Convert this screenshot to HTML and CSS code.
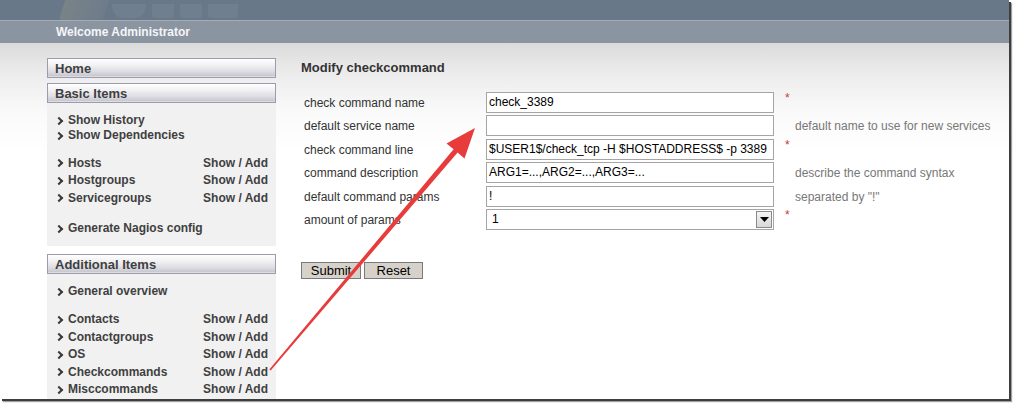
FILE: index.html
```html
<!DOCTYPE html>
<html>
<head>
<meta charset="utf-8">
<title>Modify checkcommand</title>
<link rel="stylesheet" href="styles.css">
</head>
<body>
<div class="frame">
  <div class="top">
    <div class="logo">
      <span class="lg lg1"></span><span class="lg lg2"></span><span class="lg lg3"></span><span class="lg lg4"></span><span class="lg lg5"></span>
    </div>
  </div>
  <div class="welcome">Welcome Administrator</div>
  <div class="content">
    <aside class="side">
      <div class="box-head">Home</div>
      <div class="box-head gap">Basic Items</div>
      <div class="panel p1">
        <div class="grp tight">
          <div class="item"><span class="chev"></span>Show History</div>
          <div class="item"><span class="chev"></span>Show Dependencies</div>
        </div>
        <div class="grp wide g2">
          <div class="item"><span class="chev"></span>Hosts<span class="sa">Show / Add</span></div>
          <div class="item"><span class="chev"></span>Hostgroups<span class="sa">Show / Add</span></div>
          <div class="item"><span class="chev"></span>Servicegroups<span class="sa">Show / Add</span></div>
        </div>
        <div class="grp tight g3">
          <div class="item"><span class="chev"></span>Generate Nagios config</div>
        </div>
      </div>
      <div class="box-head gap2">Additional Items</div>
      <div class="panel p2">
        <div class="grp tight">
          <div class="item"><span class="chev"></span>General overview</div>
        </div>
        <div class="grp wide g2b">
          <div class="item"><span class="chev"></span>Contacts<span class="sa">Show / Add</span></div>
          <div class="item"><span class="chev"></span>Contactgroups<span class="sa">Show / Add</span></div>
          <div class="item"><span class="chev"></span>OS<span class="sa">Show / Add</span></div>
          <div class="item"><span class="chev"></span>Checkcommands<span class="sa">Show / Add</span></div>
          <div class="item"><span class="chev"></span>Misccommands<span class="sa">Show / Add</span></div>
        </div>
      </div>
    </aside>
    <main class="main">
      <h1 class="title">Modify checkcommand</h1>
      <div class="form">
        <div class="lbl">check command name</div>
        <div class="field"><div class="inp">check_3389</div></div>
        <div class="star">*</div>
        <div class="hint"></div>

        <div class="lbl">default service name</div>
        <div class="field"><div class="inp"></div></div>
        <div class="star"></div>
        <div class="hint">default name to use for new services</div>

        <div class="lbl">check command line</div>
        <div class="field"><div class="inp">$USER1$/check_tcp -H $HOSTADDRESS$ -p 3389</div></div>
        <div class="star">*</div>
        <div class="hint"></div>

        <div class="lbl">command description</div>
        <div class="field"><div class="inp">ARG1=...,ARG2=...,ARG3=...</div></div>
        <div class="star"></div>
        <div class="hint">describe the command syntax</div>

        <div class="lbl">default command params</div>
        <div class="field"><div class="inp">!</div></div>
        <div class="star"></div>
        <div class="hint">separated by "!"</div>

        <div class="lbl">amount of params</div>
        <div class="field"><div class="inp sel"><span class="selval">1</span><span class="selbtn"><svg width="9" height="5" viewBox="0 0 9 5"><polygon points="0,0 9,0 4.5,5" fill="#000"/></svg></span></div></div>
        <div class="star">*</div>
        <div class="hint"></div>
      </div>
      <div class="buttons">
        <button class="btn b-submit">Submit</button>
        <button class="btn b-reset">Reset</button>
      </div>
    </main>
  </div>
  <svg class="arrow" width="1013" height="403" viewBox="0 0 1013 403">
    <polygon fill="#e83c3c" points="475,128 464.5,158.5 457.6,152.6 270.7,370.6 269.3,369.4 453.6,149.2 446.5,143.5"/>
  </svg>
</div>
</body>
</html>
```
FILE: styles.css
```css
html, body {
  margin: 0;
  padding: 0;
  background: #ffffff;
}
body {
  font-family: "Liberation Sans", Arial, sans-serif;
  width: 1013px;
  height: 403px;
  overflow: hidden;
}
.frame {
  position: relative;
  width: 1009px;
  height: 399px;
  overflow: hidden;
  background: #ffffff;
  box-shadow: 2px 2px 0 #3e3e3e, 3px 3px 1px #a0a0a0;
}
.top {
  height: 20px;
  background: #687889;
  border-bottom: 1px solid #a3acb7;
  overflow: hidden;
}
.logo {
  display: flex;
  align-items: flex-end;
  gap: 6px;
  height: 20px;
  padding-left: 62px;
}
.lg {
  display: block;
  height: 14px;
  margin-bottom: 2px;
  border-radius: 0 0 3px 3px;
  background: rgba(190, 196, 205, 0.09);
}
.lg1 {
  width: 44px;
  height: 20px;
  margin-bottom: 0;
  background: linear-gradient(100deg, rgba(200, 180, 130, 0.18), rgba(170, 170, 160, 0.08));
  transform: skewX(-18deg);
}
.lg2 { width: 34px; border-radius: 0 0 12px 12px; }
.lg3 { width: 22px; }
.lg4 { width: 22px; }
.lg5 { width: 30px; }
.welcome {
  height: 22px;
  line-height: 22px;
  background: #8b95a2;
  color: #f5f6f8;
  font-weight: bold;
  font-size: 12px;
  padding-left: 56px;
}
.content {
  display: flex;
  padding: 15px 0 0 47px;
  height: 341px;
  background: linear-gradient(#dbdbdb 0px, #ececec 30px, #fafafa 70px, #ffffff 110px);
}
.side {
  width: 229px;
  flex: none;
}
.box-head {
  height: 18px;
  line-height: 19px;
  border: 1px solid #9c9cae;
  background: linear-gradient(#fefefe 0%, #f1f1f3 35%, #dcdce2 70%, #c9c9d2 92%, #e6e6ea 100%);
  color: #404040;
  font-weight: bold;
  font-size: 13px;
  padding-left: 7px;
}
.box-head.gap { margin-top: 5px; }
.box-head.gap2 { margin-top: 8px; }
.panel {
  background: #f1f1f1;
  padding: 0 8px 0 10px;
}
.p1 { padding-top: 10px; padding-bottom: 10px; }
.p2 { padding-top: 10px; padding-bottom: 20px; }
.grp.tight .item { height: 15px; line-height: 15px; }
.grp.wide .item { height: 17.5px; line-height: 17.5px; }
.g2 { margin-top: 11.5px; }
.g3 { margin-top: 14px; }
.g2b { margin-top: 12px; }
.item {
  display: flex;
  align-items: center;
  font-size: 12px;
  font-weight: bold;
  color: #404040;
  white-space: nowrap;
}
.chev {
  display: inline-block;
  width: 4px;
  height: 4px;
  border-right: 2px solid #3a3a3a;
  border-bottom: 2px solid #3a3a3a;
  transform: rotate(-45deg);
  margin: 0 6px 0 -1px;
}
.sa {
  margin-left: auto;
}
.main {
  flex: 1;
  margin-left: 25px;
}
.title {
  margin: 0;
  font-size: 13px;
  line-height: 19px;
  font-weight: bold;
  color: #333;
}
.form {
  display: grid;
  grid-template-columns: 182px 288px 21px 1fr;
  grid-auto-rows: 23.5px;
  margin-top: 13.5px;
  padding-left: 3px;
}
.lbl {
  font-size: 12px;
  color: #333;
  line-height: 23.5px;
  padding-top: 1px;
}
.field {
  display: flex;
  align-items: center;
}
.inp {
  box-sizing: border-box;
  width: 288px;
  height: 21px;
  border: 1px solid #a5a5a5;
  background: #fff;
  font-size: 12px;
  line-height: 19px;
  padding-left: 2px;
  color: #000;
  white-space: nowrap;
  overflow: hidden;
}
.inp.sel {
  display: flex;
  align-items: center;
  padding-left: 0;
  padding-right: 1px;
}
.selval {
  flex: 1;
  padding-left: 5px;
}
.selbtn {
  box-sizing: border-box;
  width: 16px;
  height: 17px;
  background: linear-gradient(#f4f4f4, #d8d8d8);
  border: 1px solid #8a8a8a;
  display: flex;
  align-items: center;
  justify-content: center;
}
.star {
  color: #c43c3c;
  font-size: 12px;
  padding-left: 11px;
  line-height: 14px;
}
.hint {
  font-size: 12px;
  color: #777;
  line-height: 23.5px;
  padding-top: 1px;
  white-space: nowrap;
}
.buttons {
  display: flex;
  gap: 3px;
  margin-top: 30px;
}
.btn {
  box-sizing: border-box;
  height: 17px;
  padding: 0;
  margin: 0;
  border: 1px solid #7a7a7a;
  background: #d6d2ca;
  font-family: "Liberation Sans", Arial, sans-serif;
  font-size: 13px;
  line-height: 15px;
  color: #000;
}
.b-submit { width: 60px; }
.b-reset { width: 59px; }
.arrow {
  position: absolute;
  left: 0;
  top: 0;
  pointer-events: none;
}
```
